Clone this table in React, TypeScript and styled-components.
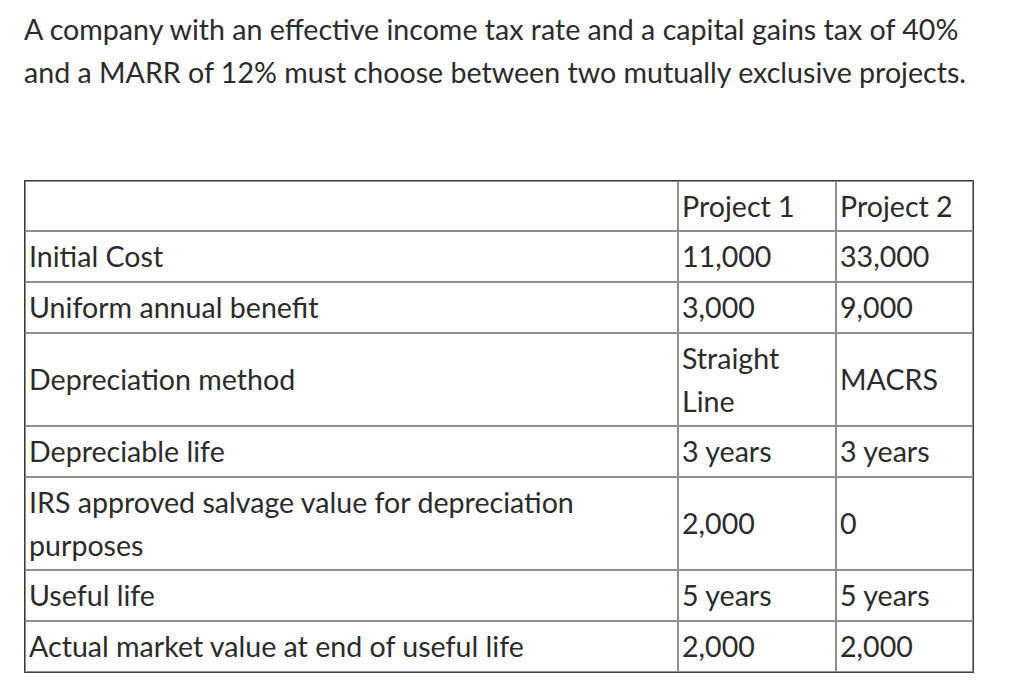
import React from "react";
import styled, { createGlobalStyle } from "styled-components";

const Global = createGlobalStyle`
  html, body { margin: 0; padding: 0; background: #ffffff; }
  body { font-family: Lato, "Open Sans", sans-serif; color: #2b2b2b; }
`;

const Page = styled.div`
  padding: 8px 24px 0 24px;
`;

const Intro = styled.p`
  margin: 0 0 86px 0;
  font-size: 28.6px;
  line-height: 1.5;
`;

const Table = styled.table`
  border-collapse: separate;
  border-spacing: 0;
  width: 948px;
  table-layout: fixed;
  border-top: 1px solid #3a3a3a;
  border-left: 1px solid #3a3a3a;
  border-right: 1px solid #444;
  border-bottom: 1px solid #444;
`;

const Cell = styled.td`
  border: 1px solid #8f8f8f;
  padding: 3px 3px;
  font-size: 28.6px;
  line-height: 42.7px;
  vertical-align: middle;
  text-align: left;
`;

const Col = styled.col<{ $w: number }>`
  width: ${(p) => p.$w}px;
`;

const rows: [string, string, string][] = [
  ["", "Project 1", "Project 2"],
  ["Initial Cost", "11,000", "33,000"],
  ["Uniform annual benefit", "3,000", "9,000"],
  ["Depreciation method", "Straight Line", "MACRS"],
  ["Depreciable life", "3 years", "3 years"],
  ["IRS approved salvage value for depreciation purposes", "2,000", "0"],
  ["Useful life", "5 years", "5 years"],
  ["Actual market value at end of useful life", "2,000", "2,000"],
];

export default function App() {
  return (
    <Page>
      <Global />
      <Intro>
        A company with an effective income tax rate and a capital gains tax of 40% and a MARR
        of 12% must choose between two mutually exclusive projects.
      </Intro>
      <Table>
        <colgroup>
          <Col $w={653} />
          <Col $w={158} />
          <Col $w={137} />
        </colgroup>
        <tbody>
          {rows.map((r, i) => (
            <tr key={i}>
              {r.map((c, j) => (
                <Cell key={j}>{c}</Cell>
              ))}
            </tr>
          ))}
        </tbody>
      </Table>
    </Page>
  );
}
